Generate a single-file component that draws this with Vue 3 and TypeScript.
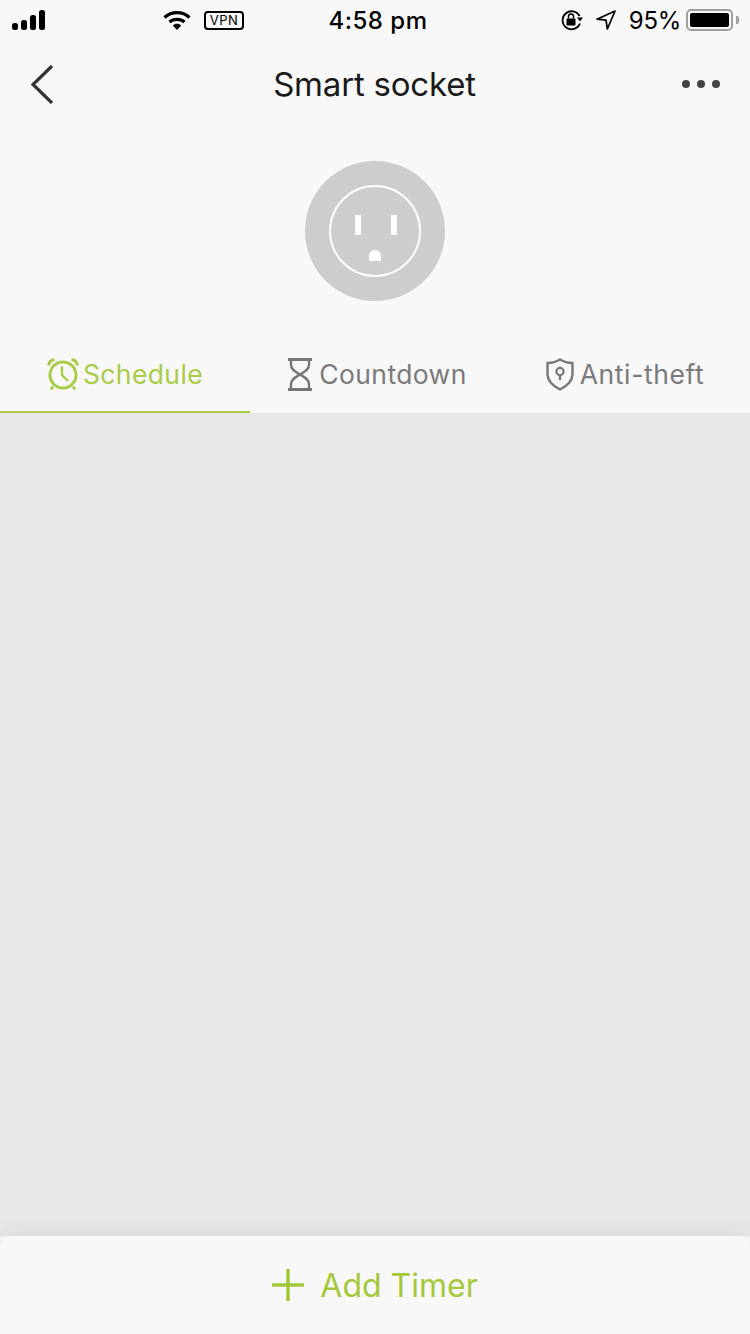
<script setup lang="ts">
const tabs = [
  { key: 'clock', label: 'Schedule', active: true },
  { key: 'hourglass', label: 'Countdown', active: false },
  { key: 'shield', label: 'Anti-theft', active: false },
]
</script>

<template>
  <div class="page">
    <div class="status">
      <div class="st-left">
        <svg class="signal" width="34" height="20" viewBox="0 0 34 20">
          <rect x="0" y="13" width="6" height="7" rx="2.5" fill="#000" />
          <rect x="9" y="10" width="6" height="10" rx="2.5" fill="#000" />
          <rect x="18" y="5" width="6" height="15" rx="2.5" fill="#000" />
          <rect x="27" y="0" width="6" height="20" rx="2.5" fill="#000" />
        </svg>
        <svg class="wifi" width="28" height="21" viewBox="0 0 28 21">
          <path d="M1.5 7.5C8.5 1 19.5 1 26.5 7.5" fill="none" stroke="#000" stroke-width="3.2" />
          <path d="M6.5 12C10.5 8.5 17.5 8.5 21.5 12" fill="none" stroke="#000" stroke-width="3.2" />
          <path d="M9.8 15.4C12 13.2 16 13.2 18.2 15.4L14 20Z" fill="#000" />
        </svg>
        <span class="vpn">VPN</span>
      </div>
      <div class="time">4:58 pm</div>
      <div class="st-right">
        <svg class="lock" width="24" height="22" viewBox="0 0 24 22">
          <path d="M20 14.5A9 9 0 1 1 19.6 7.2" fill="none" stroke="#000" stroke-width="1.8" />
          <path d="M17 8.6L23 8.6L20 12.4Z" fill="#000" />
          <rect x="6.5" y="9.5" width="9" height="7" rx="1" fill="#000" />
          <path d="M8.5 9.5V7.6a2.5 2.5 0 0 1 5 0V9.5" fill="none" stroke="#000" stroke-width="1.5" />
        </svg>
        <svg class="loc" width="22" height="22" viewBox="0 0 22 22">
          <path d="M20 2L2 10.2L11 11.2L12.4 20Z" fill="none" stroke="#000" stroke-width="1.7" stroke-linejoin="round" />
        </svg>
        <span class="pct">95%</span>
        <div class="battery"><div class="fill"></div></div>
        <div class="nub"></div>
      </div>
    </div>

    <div class="nav">
      <svg class="back" width="24" height="40" viewBox="0 0 24 40">
        <path d="M22 2L3 20.5L22 39" fill="none" stroke="#333" stroke-width="3.2" />
      </svg>
      <div class="title">Smart socket</div>
      <div class="dots"><i></i><i></i><i></i></div>
    </div>

    <div class="device">
      <svg width="140" height="140" viewBox="0 0 140 140">
        <circle cx="70" cy="70" r="70" fill="#cdcdcd" />
        <circle cx="70" cy="70" r="45" fill="none" stroke="#fff" stroke-width="2" />
        <rect x="50" y="54" width="6" height="20" fill="#fff" />
        <rect x="86" y="54" width="6" height="20" fill="#fff" />
        <path d="M64 100V95a6 6 0 0 1 12 0V100Z" fill="#fff" />
      </svg>
    </div>

    <div class="tabs">
      <div v-for="t in tabs" :key="t.key" class="tab" :class="[t.key, { active: t.active }]">
        <svg v-if="t.key === 'clock'" width="33" height="33" viewBox="0 0 33 33">
          <circle cx="16" cy="17" r="13" fill="none" stroke="#a8cc48" stroke-width="3" />
          <path d="M1.500 7.500C2 4 4 2 7.500 1.500M24.500 1.500C28 2 30 4 30.500 7.500" fill="none" stroke="#a8cc48" stroke-width="3" />
          <path d="M15 8.500V17L21 23" fill="none" stroke="#a8cc48" stroke-width="2.400" />
          <path d="M6 28.500L4 31.500M26 28.500L28 31.500" fill="none" stroke="#a8cc48" stroke-width="2.800" />
        </svg>
        <svg v-else-if="t.key === 'hourglass'" width="26" height="33" viewBox="0 0 26 33">
          <path d="M1 1.500H25M1 31.500H25" fill="none" stroke="#777" stroke-width="3" />
          <path d="M4 3V7C4 12 9 14 13 16.500C17 14 22 12 22 7V3" fill="none" stroke="#777" stroke-width="2.400" />
          <path d="M4 30V26C4 21 9 19 13 16.500C17 19 22 21 22 26V30" fill="none" stroke="#777" stroke-width="2.400" />
        </svg>
        <svg v-else width="28" height="33" viewBox="0 0 28 33">
          <path d="M14 1.500C18 4 22 5 26.500 5V16C26.500 24 20 28.500 14 31.500C8 28.500 1.500 24 1.500 16V5C6 5 10 4 14 1.500Z" fill="none" stroke="#777" stroke-width="2.400" stroke-linejoin="round" />
          <circle cx="14" cy="13.500" r="3.600" fill="none" stroke="#777" stroke-width="2.200" />
          <path d="M14 17V22" stroke="#777" stroke-width="2.400" />
        </svg>
        <span>{{ t.label }}</span>
      </div>
    </div>

    <div class="content"></div>

    <div class="add">
      <svg width="32" height="32" viewBox="0 0 32 32">
        <path d="M16 0V32M0 16H32" stroke="#a2c63a" stroke-width="3.500" />
      </svg>
      <span>Add Timer</span>
    </div>
  </div>
</template>

<style>
html, body { margin: 0; padding: 0; }
</style>

<style scoped>
.page {
  width: 750px;
  height: 1334px;
  display: flex;
  flex-direction: column;
  background: #f8f8f8;
  font-family: Inter, "Liberation Sans", sans-serif;
  overflow: hidden;
}
.status {
  height: 40px;
  display: grid;
  grid-template-columns: 1fr auto 1fr;
  align-items: center;
  color: #000;
}
.st-left { display: flex; align-items: center; padding-left: 12px; }
.signal { margin-right: 117px; }
.wifi { margin-right: 13px; }
.vpn {
  box-sizing: border-box;
  width: 40px;
  height: 19px;
  border: 2px solid #000;
  border-radius: 4px;
  font-size: 13px;
  line-height: 15px;
  text-align: center;
  letter-spacing: 0.5px;
}
.time { font-size: 24px; font-weight: 500; letter-spacing: 0.5px; padding-left: 6px; }
.st-right { display: flex; align-items: center; justify-content: flex-end; padding-right: 11px; }
.lock { margin-right: 11px; }
.loc { margin-right: 12px; }
.pct { font-size: 24px; margin-right: 5px; letter-spacing: -0.3px; }
.battery {
  box-sizing: border-box;
  width: 47px;
  height: 22px;
  border: 2px solid #a0a0a0;
  border-radius: 5px;
  padding: 2px;
}
.fill { width: 100%; height: 100%; background: #000; border-radius: 2px; }
.nub { width: 3px; height: 8px; background: #a0a0a0; margin-left: 3px; border-radius: 0 2px 2px 0; }
.nav {
  height: 88px;
  display: flex;
  align-items: center;
  justify-content: space-between;
  padding: 0 30px;
  position: relative;
}
.title {
  position: absolute;
  left: 0;
  right: 1px;
  text-align: center;
  font-size: 33px;
  color: #1a1a1a;
  letter-spacing: -0.2px;
}
.dots { display: flex; gap: 7px; margin-top: -1px; }
.dots i { width: 8px; height: 8px; border-radius: 50%; background: #444; display: block; }
.device { display: flex; justify-content: center; padding-top: 33px; height: 150px; }
.device svg { display: block; }
.tabs { display: flex; }
.tab {
  width: 250px;
  box-sizing: border-box;
  height: 102px;
  padding-top: 26px;
  display: flex;
  align-items: center;
  justify-content: center;
  gap: 6px;
  font-size: 26.5px;
  letter-spacing: 0.4px;
  color: #7a7a7a;
  border-bottom: 2px solid transparent;
}
.tab.clock { gap: 3px; }
.tab.hourglass { padding-left: 4px; }
.tab.shield { letter-spacing: 0.6px; }
.tab.active { color: #a8cc48; border-bottom-color: #a8cc48; }
.content { flex: 1; background: #e8e8e8; }
.add {
  height: 98px;
  background: #f8f8f8;
  border-radius: 10px 10px 0 0;
  box-shadow: 0 -5px 20px rgba(0, 0, 0, 0.06);
  display: flex;
  align-items: center;
  justify-content: center;
  gap: 16px;
  font-size: 32px;
  color: #a4c83a;
  position: relative;
}
</style>
